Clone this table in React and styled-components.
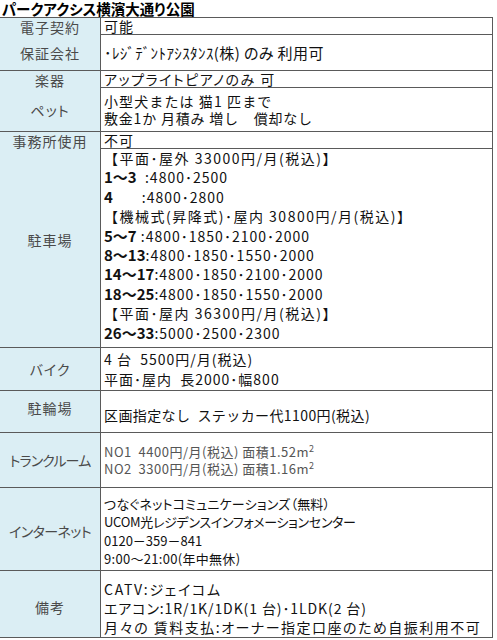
import React from "react";
import styled, { createGlobalStyle } from "styled-components";

const GlobalStyle = createGlobalStyle`
  html, body { margin: 0; padding: 0; background: #ffffff; }
  body {
    font-family: "Noto Sans CJK JP", "Noto Sans", sans-serif;
    color: #111;
  }
`;

const Sheet = styled.div`
  width: 493px;
`;

const Title = styled.div`
  height: 18px;
  box-sizing: border-box;
  border-bottom: 1px solid #5a5a5a;
  padding-left: 2px;
  font-size: 14.5px;
  font-weight: 700;
  line-height: 17px;
  color: #000;
  font-feature-settings: "palt";
  white-space: nowrap;
`;

const Row = styled.div`
  display: grid;
  grid-template-columns: 101px 1fr;
  height: ${(p) => p.$h}px;
  box-sizing: border-box;
  border-bottom: 1px solid #5a5a5a;
  border-right: 1px solid #5a5a5a;
`;

const Label = styled.div`
  background: #dbeef4;
  border-right: 1px solid #5a5a5a;
  display: flex;
  align-items: center;
  justify-content: center;
  color: #4a4a4a;
  font-size: 14px;
  line-height: 16px;
  letter-spacing: ${(p) => p.$ls ?? 1}px;
  font-feature-settings: "palt";
  padding-top: ${(p) => p.$pt ?? 0}px;
  padding-bottom: ${(p) => p.$pb ?? 0}px;
  box-sizing: border-box;
  white-space: nowrap;
`;

const Cell = styled.div`
  --lh: ${(p) => p.$lh ?? 17}px;
  display: flex;
  flex-direction: column;
  justify-content: ${(p) => p.$align ?? "center"};
  padding-left: 3px;
  padding-top: ${(p) => p.$pt ?? 0}px;
  padding-bottom: ${(p) => p.$pb ?? 0}px;
  box-sizing: border-box;
  font-size: ${(p) => p.$fs ?? 14}px;
  line-height: var(--lh);
  letter-spacing: ${(p) => p.$ls ?? 0.6}px;
  color: ${(p) => p.$color ?? "#111"};
  font-feature-settings: ${(p) => (p.$palt ? '"palt"' : "normal")};
  white-space: nowrap;
`;

const Line = styled.div`
  height: var(--lh);
  flex: none;
  white-space: pre;
  ${(p) => (p.$ls !== undefined ? `letter-spacing: ${p.$ls}px;` : "")}
`;

const ParkNo = styled.span`
  font-weight: 700;
  font-size: 15px;
  letter-spacing: 0;
  line-height: 1;
`;

const Num = styled.span`
  line-height: 1;
`;

const Sup = styled.span`
  font-size: 9px;
  vertical-align: 5px;
  line-height: 1;
`;

const parking = [
  { head: "【平面･屋外 33000円/月(税込)】" },
  { no: "1〜3", val: "  :4800･2500" },
  { no: "4", val: "       :4800･2800" },
  { head: "【機械式(昇降式)･屋内 30800円/月(税込)】" },
  { no: "5〜7", val: " :4800･1850･2100･2000" },
  { no: "8〜13", val: ":4800･1850･1550･2000" },
  { no: "14〜17", val: ":4800･1850･2100･2000" },
  { no: "18〜25", val: ":4800･1850･1550･2000" },
  { head: "【平面･屋内 36300円/月(税込)】" },
  { no: "26〜33", val: ":5000･2500･2300" },
];

export default function App() {
  return (
    <>
      <GlobalStyle />
      <Sheet>
        <Title>パークアクシス横濱大通り公園</Title>

        <Row $h={17}>
          <Label>電子契約</Label>
          <Cell $ls={1}>可能</Cell>
        </Row>

        <Row $h={36}>
          <Label>保証会社</Label>
          <Cell $fs={15} $ls={0.4} $palt>･ﾚｼﾞﾃﾞﾝﾄｱｼｽﾀﾝｽ(株) のみ 利用可</Cell>
        </Row>

        <Row $h={17}>
          <Label>楽器</Label>
          <Cell $ls={1.5} $palt>アップライトピアノのみ 可</Cell>
        </Row>

        <Row $h={44}>
          <Label>ペット</Label>
          <Cell>
            <Line $ls={1.1}>小型犬または 猫1 匹まで</Line>
            <Line $ls={0.8}>敷金1か 月積み 増し　償却なし</Line>
          </Cell>
        </Row>

        <Row $h={17}>
          <Label>事務所使用</Label>
          <Cell $ls={1}>不可</Cell>
        </Row>

        <Row $h={199}>
          <Label $pb={16}>駐車場</Label>
          <Cell $align="flex-start" $pt={0} $lh={19.4} $ls={1}>
            {parking.map((p, i) =>
              p.head ? (
                <Line key={i} $ls={1.5}>{p.head}</Line>
              ) : (
                <Line key={i}>
                  <ParkNo>{p.no}</ParkNo>
                  <Num>{p.val}</Num>
                </Line>
              )
            )}
          </Cell>
        </Row>

        <Row $h={43}>
          <Label>バイク</Label>
          <Cell $lh={20} $ls={1}>
            <Line>4 台  5500円/月(税込)</Line>
            <Line>平面･屋内  長2000･幅800</Line>
          </Cell>
        </Row>

        <Row $h={42}>
          <Label $pb={8}>駐輪場</Label>
          <Cell $pt={8} $ls={0.4}>
            <Line>区画指定なし  ステッカー代1100円(税込)</Line>
          </Cell>
        </Row>

        <Row $h={55}>
          <Label $ls={-0.9}>トランクルーム</Label>
          <Cell $color="#555" $fs={13} $ls={0.5} $palt>
            <Line>NO1  4400円/月(税込) 面積1.52m<Sup>2</Sup></Line>
            <Line>NO2  3300円/月(税込) 面積1.16m<Sup>2</Sup></Line>
          </Cell>
        </Row>

        <Row $h={83}>
          <Label $pt={4} $ls={-0.6}>インターネット</Label>
          <Cell $pt={5} $lh={18.4} $fs={13} $ls={0} $palt>
            <Line $ls={0.2}>つなぐネットコミュニケーションズ（無料）</Line>
            <Line $ls={-0.3}>UCOM光レジデンスインフォメーションセンター</Line>
            <Line>0120－359－841</Line>
            <Line $ls={0.3}>9:00〜21:00(年中無休)</Line>
          </Cell>
        </Row>

        <Row $h={67}>
          <Label $pt={6}>備考</Label>
          <Cell $pt={8} $lh={19} $ls={1.5} $palt>
            <Line $ls={1.7}>CATV:ジェイコム</Line>
            <Line $ls={0.9}>エアコン:1R/1K/1DK(1 台)･1LDK(2 台)</Line>
            <Line>月々の 賃料支払:オーナー指定口座のため自振利用不可</Line>
          </Cell>
        </Row>
      </Sheet>
    </>
  );
}
